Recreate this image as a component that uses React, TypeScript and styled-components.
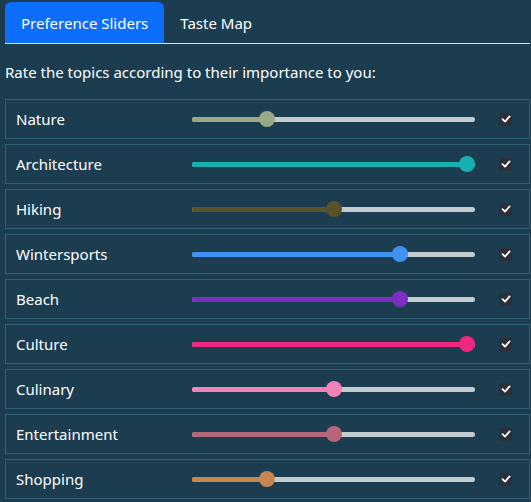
import React from 'react';
import styled, { createGlobalStyle } from 'styled-components';

const GlobalStyle = createGlobalStyle`
  html, body {
    margin: 0;
    padding: 0;
    background: #1b3d4f;
  }
  body {
    font-family: 'Noto Sans', 'Open Sans', sans-serif;
    color: #ffffff;
  }
`;

const Page = styled.div`
  display: flex;
  flex-direction: column;
  padding: 2px 1px 0 5px;
  width: 531px;
  box-sizing: border-box;
`;

const TabBar = styled.div`
  display: flex;
  border-bottom: 1px solid #d4e3e8;
  height: 42px;
  box-sizing: border-box;
`;

const Tab = styled.div<{ $active?: boolean }>`
  display: flex;
  align-items: center;
  padding: 0 16px;
  height: 41px;
  box-sizing: border-box;
  font-size: 15px;
  border-radius: 6px 6px 0 0;
  background: ${(p) => (p.$active ? '#0d6efd' : 'transparent')};
  color: #ffffff;
`;

const Intro = styled.p`
  margin: 17px 0 16px;
  font-size: 15px;
  line-height: 22px;
`;

const List = styled.div`
  display: flex;
  flex-direction: column;
  gap: 5px;
`;

const Row = styled.div`
  display: grid;
  grid-template-columns: 176px 283px 1fr;
  align-items: center;
  height: 40px;
  box-sizing: border-box;
  border: 1px solid #2f6373;
  padding-left: 10px;
`;

const Label = styled.span`
  font-size: 15px;
`;

const Track = styled.div`
  position: relative;
  height: 5px;
  border-radius: 3px;
  background: #c2cbce;
`;

const Fill = styled.div<{ $color: string }>`
  position: absolute;
  left: 0;
  top: 0;
  bottom: 0;
  border-radius: 3px;
  background: ${(p) => p.$color};
`;

const Thumb = styled.div<{ $color: string }>`
  position: absolute;
  top: 50%;
  width: 16px;
  height: 16px;
  margin: -8px 0 0 -8px;
  border-radius: 50%;
  background: ${(p) => p.$color};
`;

const CheckBox = styled.span`
  display: flex;
  align-items: center;
  justify-content: center;
  margin-left: 24px;
  width: 13px;
  height: 13px;
  border-radius: 2px;
  background: #2a2f38;
`;

interface Topic {
  name: string;
  color: string;
  value: number;
}

const topics: Topic[] = [
  { name: 'Nature', color: '#9aaa88', value: 0.25 },
  { name: 'Architecture', color: '#17b0b0', value: 1 },
  { name: 'Hiking', color: '#5b5127', value: 0.5 },
  { name: 'Wintersports', color: '#3f92f2', value: 0.75 },
  { name: 'Beach', color: '#7b2fc3', value: 0.75 },
  { name: 'Culture', color: '#f0267f', value: 1 },
  { name: 'Culinary', color: '#f283b6', value: 0.5 },
  { name: 'Entertainment', color: '#b5677a', value: 0.5 },
  { name: 'Shopping', color: '#c6864f', value: 0.25 },
];

const TRACK = 283;
const R = 8;

const Slider: React.FC<{ color: string; value: number }> = ({ color, value }) => {
  const x = R + value * (TRACK - 2 * R);
  return (
    <Track>
      <Fill $color={color} style={{ width: x }} />
      <Thumb $color={color} style={{ left: x }} />
    </Track>
  );
};

const App: React.FC = () => (
  <>
    <GlobalStyle />
    <Page>
      <TabBar>
        <Tab $active>Preference Sliders</Tab>
        <Tab>Taste Map</Tab>
      </TabBar>
      <Intro>Rate the topics according to their importance to you:</Intro>
      <List>
        {topics.map((t) => (
          <Row key={t.name}>
            <Label>{t.name}</Label>
            <Slider color={t.color} value={t.value} />
            <CheckBox>
              <svg width="10" height="10" viewBox="0 0 10 10">
                <path d="M1.5 5.2 L4 7.6 L8.6 2.4" fill="none" stroke="#fff" strokeWidth="1.8" strokeLinecap="round" strokeLinejoin="round" />
              </svg>
            </CheckBox>
          </Row>
        ))}
      </List>
    </Page>
  </>
);

export default App;
